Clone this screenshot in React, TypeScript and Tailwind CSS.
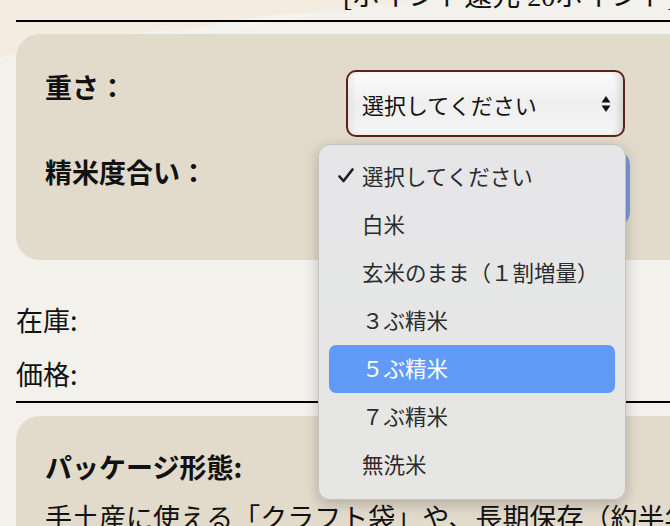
import React from 'react';

const options = [
  '選択してください',
  '白米',
  '玄米のまま（１割増量）',
  '３ぶ精米',
  '５ぶ精米',
  '７ぶ精米',
  '無洗米',
];

const SelectArrows: React.FC = () => (
  <svg width="10" height="18" viewBox="0 0 10 18" className="shrink-0">
    <path d="M5 1 L9.5 7.5 L0.5 7.5 Z" fill="#111" />
    <path d="M5 17 L9.5 10.5 L0.5 10.5 Z" fill="#111" />
  </svg>
);

const FakeSelect: React.FC<{ focused?: boolean }> = ({ focused }) => (
  <div
    className={`w-[279px] h-[67px] rounded-[10px] border-2 border-[#5b2317] bg-gradient-to-b from-[#fbfbfb] via-[#efefef] to-[#f5f5f5] shadow-[inset_-8px_0_10px_-6px_rgba(0,0,0,0.18),inset_8px_0_10px_-6px_rgba(0,0,0,0.08)] flex items-center justify-between pl-[14px] pr-[12px] ${
      focused ? 'ring-[5px] ring-[#7f99dc]' : ''
    }`}
  >
    <span className="text-[22px] leading-none text-[#111]">選択してください</span>
    <SelectArrows />
  </div>
);

const App: React.FC = () => {
  const selected = 4;

  return (
    <div className="relative w-[670px] h-[526px] overflow-hidden bg-[#f3f1ec] font-['Noto_Sans_CJK_JP',sans-serif] text-[#111]">
      {/* background swoosh */}
      <svg className="absolute left-0 top-0" width="670" height="200" viewBox="0 0 670 200">
        <path d="M0 0 L420 0 C360 6 300 14 250 22 C200 28 150 30 110 36 C60 44 25 50 0 58 Z" fill="#f4ece0" />
        <path d="M180 34 C220 20 270 14 320 12 C290 20 250 28 210 34 Z" fill="#f5f3ee" />
      </svg>

      <div className="relative w-[720px] pl-4">
        <div className="border-b-2 border-black pb-[6px] -mt-[20px]">
          <h2 className="ml-[327px] whitespace-nowrap text-[28px] leading-[34px] font-['Liberation_Serif','Noto_Sans_CJK_JP',serif]">
            [ポイント還元 20ポイント]
          </h2>
        </div>

        <div className="mt-[12px] rounded-[24px] bg-[#e2dacb] pt-[36px] pb-[38px] pl-[29px] flex flex-col gap-[18px]">
          <div className="flex items-start">
            <span className="w-[301px] pt-[1px] text-[27px] leading-[32px] font-bold">重さ：</span>
            <FakeSelect />
          </div>
          <div className="flex items-start">
            <span className="w-[301px] pt-[1px] text-[27px] leading-[32px] font-bold">精米度合い：</span>
            <FakeSelect focused />
          </div>
        </div>

        <div className="mt-[33px] border-b-2 border-black text-[27px]">
          <p className="h-[54px] leading-[54px]">在庫:</p>
          <p className="h-[54px] leading-[54px]">価格:</p>
        </div>

        <div className="mt-[13px] rounded-[24px] bg-[#e2dacb] pt-[34px] pl-[29px] h-[200px]">
          <p className="text-[27px] leading-[34px] font-bold">パッケージ形態:</p>
          <p className="mt-[16px] whitespace-nowrap text-[27px] leading-[34px]">
            手土産に使える「クラフト袋」や、長期保存（約半年）に適した真空パック
          </p>
        </div>
      </div>

      {/* open dropdown menu */}
      <div className="absolute left-[318px] top-[144px] w-[308px] h-[356px] rounded-[12px] border border-[#c4c2bd] bg-gradient-to-b from-[#e6e6e9] to-[#e6e7e3] shadow-[0_4px_14px_rgba(0,0,0,0.22)] pt-[8px] px-[10px]">
        {options.map((opt, i) => (
          <div
            key={opt}
            className={`relative h-[48px] rounded-[7px] flex items-center pl-[33px] pb-[3px] text-[21.5px] leading-none ${
              i === selected ? 'bg-[#629af7] text-white' : 'text-[#2b2b2b]'
            }`}
          >
            {i === 0 && (
              <svg className="absolute left-[9px] top-[15px]" width="16" height="15" viewBox="0 0 16 15">
                <path d="M1.5 8.5 L5.5 13 L14.5 1.5" fill="none" stroke="#1d1d1d" strokeWidth="2.6" strokeLinecap="round" strokeLinejoin="round" />
              </svg>
            )}
            {opt}
          </div>
        ))}
      </div>
    </div>
  );
};

export default App;
